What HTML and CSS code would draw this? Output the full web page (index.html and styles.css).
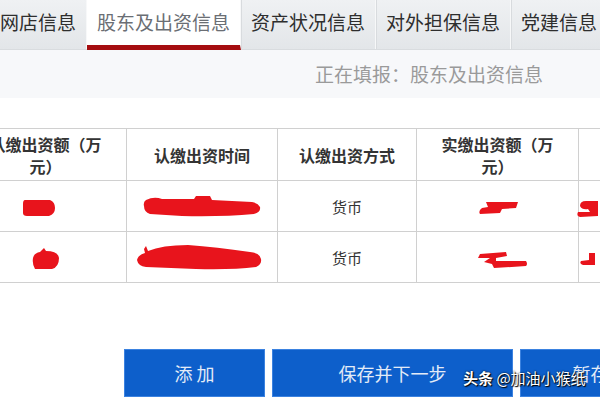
FILE: index.html
```html
<!DOCTYPE html>
<html lang="zh">
<head>
<meta charset="utf-8">
<title>股东及出资信息</title>
<link rel="stylesheet" href="styles.css">
</head>
<body>
<div class="page">
  <nav class="tabs">
    <div class="tab">网店信息</div>
    <div class="tab active">股东及出资信息</div>
    <div class="tab">资产状况信息</div>
    <div class="tab">对外担保信息</div>
    <div class="tab">党建信息</div>
  </nav>
  <div class="status">正在填报：股东及出资信息</div>
  <div class="table-wrap">
    <table class="grid">
      <colgroup>
        <col class="c1"><col class="c2"><col class="c3"><col class="c4"><col class="c5">
      </colgroup>
      <thead>
        <tr>
          <th class="wide">认缴出资额（万元）</th>
          <th>认缴出资时间</th>
          <th>认缴出资方式</th>
          <th class="wide">实缴出资额（万元）</th>
          <th></th>
        </tr>
      </thead>
      <tbody>
        <tr>
          <td><svg class="mask m1" width="34" height="19" viewBox="0 0 34 19"><path d="M3 2 Q1 2 1 6 L1 15 Q1 18 5 18 L27 18 Q33 16 33 10 Q33 4 28 2 Z" fill="#e8141c"/></svg></td>
          <td><svg class="mask m2" width="120" height="24" viewBox="0 0 120 24"><path d="M4 6 Q1 8 2 12 Q2 18 8 20 L40 22 Q80 23 112 20 Q119 18 118 13 Q116 9 110 8 L70 6 L68 2 L54 2 L52 5 L20 5 Q12 2 4 6 Z" fill="#e8141c"/></svg></td>
          <td>货币</td>
          <td><svg class="mask m3" width="40" height="12" viewBox="0 0 40 12"><path d="M8 0 L40 0 L38 6 L24 7 L22 11 L2 12 Q0 9 4 6 L10 5 Z" fill="#e8141c"/></svg></td>
          <td><svg class="mask m5" width="22" height="18" viewBox="0 0 22 18"><path d="M10 2 Q4 2 4 7 Q6 11 12 10 L14 13 L2 13 Q0 17 4 18 L22 17 L22 2 Z" fill="#e8141c"/></svg></td>
        </tr>
        <tr>
          <td><svg class="mask m4" width="28" height="22" viewBox="0 0 28 22"><path d="M8 4 L12 0 L14 3 Q26 3 27 10 Q27 19 20 21 L3 21 Q0 16 1 10 Q2 5 8 4 Z" fill="#e8141c"/></svg></td>
          <td><svg class="mask m6" width="126" height="28" viewBox="0 0 126 28"><path d="M8 6 L9 10 Q2 12 1 17 Q2 23 10 24 L60 26 Q96 27 120 24 Q126 21 125 16 Q124 10 114 9 Q80 4 52 2 Q26 2 12 8 L10 3 Z" fill="#e8141c"/></svg></td>
          <td>货币</td>
          <td><svg class="mask m7" width="52" height="16" viewBox="0 0 52 16"><path d="M4 2 L30 0 L31 4 L20 6 L20 9 L50 9 Q52 12 50 14 L18 16 L16 12 L8 10 L14 6 L2 6 Z" fill="#e8141c"/></svg></td>
          <td><svg class="mask m8" width="16" height="16" viewBox="0 0 16 16"><path d="M10 2 L16 2 L16 14 L4 14 Q0 13 2 10 L10 9 Z" fill="#e8141c"/></svg></td>
        </tr>
      </tbody>
    </table>
  </div>
  <div class="actions">
    <button class="btn btn-add">添 加</button>
    <button class="btn btn-next">保存并下一步</button>
    <button class="btn btn-save">暂存</button>
  </div>
  <div class="watermark"><b>头条</b> @加油小猴纸</div>
</div>
</body>
</html>
```

FILE: styles.css
```css
html, body {
  margin: 0;
  padding: 0;
  background: #ffffff;
}

.page {
  position: relative;
  width: 600px;
  height: 400px;
  overflow: hidden;
  font-family: "Noto Sans CJK SC", "Microsoft YaHei", sans-serif;
  color: #333;
}

.tabs {
  display: flex;
  height: 50px;
  margin-left: -10px;
  background: linear-gradient(#eff1f3, #e3e6e9);
  border-bottom: 1px solid #d9dcdf;
  box-sizing: border-box;
}

.tab {
  padding: 9px 10px 0;
  font-size: 19px;
  line-height: 26px;
  color: #2e2e2e;
  border-right: 1px solid #f7f8f9;
  box-shadow: 1px 0 0 #d8dbde;
  white-space: nowrap;
}

.tab.active {
  background: #ffffff;
  color: #6a6e74;
  border-bottom: 5px solid #a50d10;
  margin-bottom: -1px;
}

.status {
  height: 48px;
  background: #f7f8fa;
  box-sizing: border-box;
  padding-right: 57px;
  text-align: right;
  font-size: 19px;
  line-height: 48px;
  color: #9a9a9a;
}

.table-wrap {
  margin-top: 30px;
  margin-left: -36px;
}

.grid {
  border-collapse: collapse;
  table-layout: fixed;
  width: 740px;
}

.c1 { width: 162px; }
.c2 { width: 151px; }
.c3 { width: 139px; }
.c4 { width: 162px; }
.c5 { width: 126px; }

.grid th,
.grid td {
  border: 1.5px solid #d0d0d0;
  text-align: center;
  vertical-align: middle;
  padding: 0 4px;
}

.grid th.wide {
  padding: 0 22px;
}

.grid th {
  height: 51px;
  font-size: 16px;
  line-height: 22px;
  font-weight: bold;
  color: #333;
}

.grid td {
  height: 50px;
  font-size: 15px;
  color: #333;
}

.mask {
  display: inline-block;
  vertical-align: middle;
}

.m1 { margin-right: 14px; }
.m4 { margin-top: 4px; }
.m5, .m8 { margin-left: -110px; }
.m6 { margin-right: 6px; }
.m7 { margin-left: 8px; margin-top: 4px; }

.actions {
  display: flex;
  gap: 7px;
  margin-top: 66px;
  padding-left: 124px;
}

.btn {
  flex: none;
  height: 48px;
  border: 1px solid #3b82e0;
  background: #0d5fcb;
  color: #e3ebf7;
  font-family: "Noto Sans CJK SC", sans-serif;
  font-size: 18px;
  padding: 0;
  border-radius: 0;
}

.btn-add { width: 141px; }
.btn-next { width: 241px; }
.btn-save { width: 141px; }

.watermark {
  position: absolute;
  left: 463px;
  top: 367px;
  font-size: 15px;
  color: #ffffff;
  text-shadow: 0 0 2px #000, 1px 1px 1px #000;
  white-space: nowrap;
}
```
